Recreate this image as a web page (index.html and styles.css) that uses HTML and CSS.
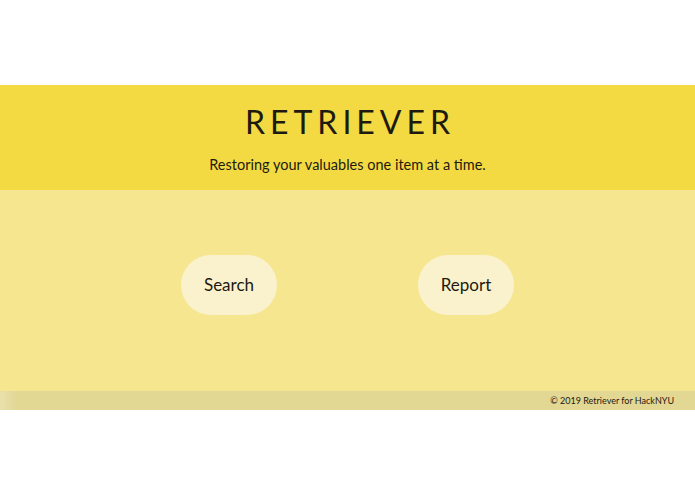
FILE: index.html
```html
<!DOCTYPE html>
<html>
<head>
<meta charset="utf-8">
<link rel="stylesheet" href="styles.css">
</head>
<body>
<div class="page">
  <header class="hero">
    <h1 class="title">RETRIEVER</h1>
    <p class="tagline">Restoring your valuables one item at a time.</p>
  </header>
  <main class="actions">
    <a class="btn">Search</a>
    <a class="btn">Report</a>
  </main>
  <footer class="foot">© 2019 Retriever for HackNYU</footer>
</div>
</body>
</html>
```
FILE: styles.css
```css
html, body {
  margin: 0;
  padding: 0;
  background: #ffffff;
}
body {
  font-family: Lato, "Noto Sans", sans-serif;
  color: #1d1a10;
}
.page {
  padding-top: 85px;
}
.hero {
  background: #f4da42;
  height: 105px;
  box-sizing: border-box;
  padding-top: 19px;
  text-align: center;
}
.title {
  margin: 0;
  font-weight: 400;
  font-size: 32px;
  line-height: 36px;
  letter-spacing: 5px;
  padding-left: 5px;
}
.tagline {
  margin: 16px 0 0;
  font-size: 14.5px;
  line-height: 18px;
}
.actions {
  background: #f6e690;
  height: 201px;
  box-sizing: border-box;
  padding-bottom: 12px;
  display: flex;
  justify-content: center;
  align-items: center;
  gap: 141px;
}
.btn {
  width: 96px;
  height: 60px;
  border-radius: 30px;
  background: #faf2cd;
  display: flex;
  align-items: center;
  justify-content: center;
  font-size: 17px;
  color: #1d1a10;
}
.foot {
  height: 19px;
  background: #e3d794;
  box-shadow: inset 18px 0 14px -10px rgba(255,255,255,0.25);
  font-size: 9px;
  line-height: 19px;
  text-align: right;
  padding-right: 21px;
}
```
